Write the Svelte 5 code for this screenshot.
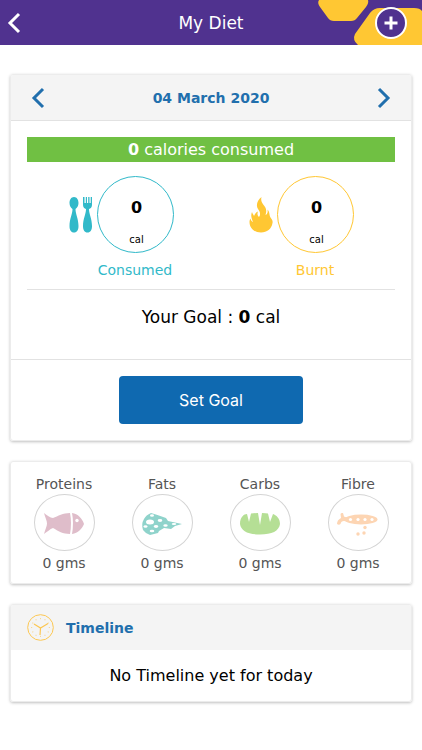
<script>
	// ---- state ----
	const DAY = 24 * 60 * 60 * 1000;

	let date = $state(Date.UTC(2020, 2, 4));
	let consumed = $state(0);
	let burnt = $state(0);
	let goal = $state(0);

	const nutrients = [
		{ id: 'proteins', label: 'Proteins', grams: 0 },
		{ id: 'fats', label: 'Fats', grams: 0 },
		{ id: 'carbs', label: 'Carbs', grams: 0 },
		{ id: 'fibre', label: 'Fibre', grams: 0 }
	];

	const ticks = Array.from({ length: 12 }, (_, i) => i * 30);

	let dateLabel = $derived(
		new Date(date).toLocaleDateString('en-GB', {
			day: '2-digit',
			month: 'long',
			year: 'numeric',
			timeZone: 'UTC'
		})
	);
</script>

<header class="topbar">
	<svg class="hexes" width="106" height="45" viewBox="0 0 106 45" aria-hidden="true">
		<path
			d="M3 0Q1 3 4 7L12 18Q14 21 18 21H35Q39 21 41 18L50 7Q53 3 52 0ZM42 45Q36 40 39 34L54 13Q58 8 64 8H98Q104 8 106 11V45Z"
			fill="#ffc733"
		/>
	</svg>
	<button type="button" class="icon-btn" aria-label="Back">
		<svg width="14" height="22" viewBox="0 0 14 22"><path d="M12 2L3 11L12 20" /></svg>
	</button>
	<h1>My Diet</h1>
	<button type="button" class="add" aria-label="Add">
		<svg width="34" height="34" viewBox="0 0 34 34">
			<circle cx="17" cy="17" r="15" fill="#50328f" stroke="#fff" stroke-width="2" />
			<path d="M17 10.500V23.500M10.500 17H23.500" stroke="#fff" stroke-width="3" />
		</svg>
	</button>
</header>

<main>
	<section class="card">
		<div class="card-head dates">
			<button
				type="button"
				class="icon-btn"
				aria-label="Previous day"
				onclick={() => (date -= DAY)}
			>
				<svg width="14" height="22" viewBox="0 0 14 22"><path d="M12 2L3 11L12 20" /></svg>
			</button>
			<h2>{dateLabel}</h2>
			<button type="button" class="icon-btn" aria-label="Next day" onclick={() => (date += DAY)}>
				<svg width="14" height="22" viewBox="0 0 14 22"><path d="M2 2L11 11L2 20" /></svg>
			</button>
		</div>

		<div class="summary">
			<p class="banner"><b>{consumed}</b> calories consumed</p>
			<div class="meters">
				<div class="meter consumed">
					<svg width="24" height="36" viewBox="0 0 24 36" fill="currentColor" aria-hidden="true">
						<path
							d="M5 0C8 0 9.500 3 9.500 6C9.500 9 8 11 6.500 12C6.500 17 9.500 22 9.500 29C9.500 33 8 35.500 5 35.500S.500 33 .500 29C.500 22 3.500 17 3.500 12C2 11 .500 9 .500 6C.500 3 2 0 5 0Z"
						/>
						<path
							d="M14 0H15.500V6H16.800V0H18V6H19.200V0H20.500V6H21.700V0H23V8C23 10.500 21.500 11.500 20 12C20 17 23 22 23 29C23 33 21.500 35.500 18.500 35.500S14 33 14 29C14 22 17 17 17 12C15.500 11.500 14 10.500 14 8Z"
						/>
					</svg>
					<div class="ring"><b>{consumed}</b><small>cal</small></div>
					<span class="name">Consumed</span>
				</div>
				<div class="meter burnt">
					<svg width="24" height="36" viewBox="0 0 24 36" fill="currentColor" aria-hidden="true">
						<path
							d="M12.500 0C11.500 4 13 6 15 8.500C17 11 18 13.500 16.500 18C18.500 17 19 15 18.500 12.500C21 15 20 18 21.500 20.500C23 22.500 24 24 23.500 26C22.500 32 18 35.500 12 35.500C5 35.500 .500 31 .500 25C.500 23.500 1 22.500 1.500 21.500C2 23.500 2.500 24.500 4 25C2.500 21 1.500 18.500 3 15C3.500 17 4.500 17.500 5 19C6 17 6.500 15.500 9 14.500C8 17 8.500 18.500 10 20C12 17 11 15 9 12C6.500 8 8.500 3 12.500 0Z"
						/>
					</svg>
					<div class="ring"><b>{burnt}</b><small>cal</small></div>
					<span class="name">Burnt</span>
				</div>
			</div>
			<p class="goal">Your Goal : <b>{goal}</b> cal</p>
		</div>

		<div class="actions">
			<button type="button" class="primary">Set Goal</button>
		</div>
	</section>

	<section class="card nutrients">
		{#each nutrients as item (item.id)}
			<div class="nutrient">
				<span>{item.label}</span>
				<div class="plate">
					<svg width="44" height="34" viewBox="0 0 44 34" aria-hidden="true">
						{#if item.id === 'proteins'}
							<g fill="#dfbdca">
								<path
									d="M2 7C5 9 8 12 11 12C16 10 21 7 28 7Q30 17 28 28C21 28 16 25 11 22C8 23 5 26 2 28C3 24 5 20 5 17.500C5 15 3 11 2 7Z"
								/>
								<path d="M30 7C36 8 40 12 42 18C40 23 36 27 30 28Q32 17 30 7Z" />
							</g>
							<circle cx="35" cy="14.500" r="1.700" fill="#fff" />
						{:else if item.id === 'fats'}
							<path
								d="M11 7Q18 9 26 12L28 15L42 18L35 20L31 23L24 22L19 25L18 27L10 29Q6 28 3 24Q1 18 4 13Q6 9 11 7Z"
								fill="#8fd3cb"
							/>
							<g fill="#fff">
								<ellipse cx="12" cy="9.500" rx="2" ry="1.200" />
								<ellipse cx="10" cy="16" rx="4" ry="2.500" />
								<ellipse cx="20" cy="14.500" rx="2.300" ry="1.400" />
								<ellipse cx="5.500" cy="20.500" rx="2" ry="1.300" />
								<ellipse cx="16" cy="20.500" rx="2.200" ry="1.400" />
								<ellipse cx="25.500" cy="19.500" rx="2.200" ry="1.200" />
								<ellipse cx="34" cy="18" rx="2.300" ry="1" />
								<ellipse cx="12" cy="25" rx="2.300" ry="1.300" />
							</g>
						{:else if item.id === 'carbs'}
							<path
								d="M2 18C2 11 6 8 9 8L11 16L13 7.500Q16 7 20 7L22 19L24 7Q28 7 30 7.500L32 16L35 8C38 9 42 12 42 18C41 25 34 28.500 22 28.500S3 25 2 18Z"
								fill="#b5df95"
							/>
						{:else}
							<g fill="#fdd5b3">
								<ellipse cx="25" cy="13.500" rx="16.500" ry="5" />
								<path
									d="M14 10.500Q10 12 8 10.500L7 7Q5 6.500 4.500 8L5 12Q1 14 1 18Q3 19.500 4.500 18Q5 15 8 15L14 16Z"
								/>
								<circle cx="29" cy="21.500" r="1.700" />
								<circle cx="22" cy="28" r="1.700" />
								<circle cx="28" cy="27" r="1.700" />
							</g>
							<g fill="#fff">
								<circle cx="14.500" cy="13.500" r="1.600" />
								<circle cx="22" cy="13.500" r="1.600" />
								<circle cx="29" cy="13.500" r="1.600" />
								<circle cx="36" cy="13.500" r="1.600" />
							</g>
						{/if}
					</svg>
				</div>
				<span>{item.grams} gms</span>
			</div>
		{/each}
	</section>

	<section class="card">
		<div class="card-head timeline">
			<svg width="27" height="27" viewBox="0 0 27 27" fill="none" stroke="#fcc752" aria-hidden="true">
				<circle cx="13.500" cy="13.500" r="12.800" />
				{#each ticks as angle (angle)}
					<path
						d="M13.500 4V5.200"
						stroke-opacity="0.600"
						transform="rotate({angle} 13.500 13.500)"
					/>
				{/each}
				<path d="M7 10L13.500 14L21 9.500M13.500 14L13 21" stroke-width="1.200" />
			</svg>
			<h2>Timeline</h2>
		</div>
		<p class="empty">No Timeline yet for today</p>
	</section>
</main>

<style>
	:global(body) {
		margin: 0;
		background: #fff;
		color: #000;
		font-family: 'DejaVu Sans', Verdana, sans-serif;
		font-size: 14px;
		line-height: 20px;
	}
	h1,
	h2,
	p {
		margin: 0;
	}
	svg {
		display: block;
	}
	button {
		padding: 0;
		border: 0;
		background: none;
		font: inherit;
		cursor: pointer;
	}

	/* top bar */
	.topbar {
		position: relative;
		display: flex;
		align-items: center;
		justify-content: space-between;
		height: 45px;
		padding: 0 14px 0 7px;
		background: #50328f;
		color: #fff;
	}
	.topbar h1 {
		flex: 1;
		padding-left: 27px;
		font-size: 17px;
		font-weight: 400;
		text-align: center;
	}
	.hexes {
		position: absolute;
		top: 0;
		right: 0;
	}
	.add {
		position: relative;
	}
	.icon-btn {
		color: inherit;
	}
	.icon-btn path {
		fill: none;
		stroke: currentColor;
		stroke-width: 3;
	}

	/* cards */
	main {
		display: flex;
		flex-direction: column;
		gap: 20px;
		padding: 29px 10px;
	}
	.card {
		overflow: hidden;
		border: 1px solid #ececec;
		border-radius: 3px;
		box-shadow: 0 1px 3px rgba(0, 0, 0, 0.25);
	}
	.card-head {
		display: flex;
		align-items: center;
		height: 45px;
		padding: 0 20px;
		background: #f4f4f4;
		color: #216fad;
	}
	.card-head h2 {
		font-size: 14px;
		font-weight: 700;
	}
	.dates {
		justify-content: space-between;
		border-bottom: 1px solid #e2e2e2;
	}
	.timeline {
		gap: 12px;
		padding: 0 16px;
	}

	/* day summary */
	.summary {
		padding: 16px 16px 0;
	}
	.banner {
		background: #70c043;
		color: #fff;
		font-size: 16px;
		line-height: 25px;
		text-align: center;
	}
	.meters {
		display: flex;
		justify-content: center;
		gap: 75px;
		padding: 14px 0 9px;
		border-bottom: 1px solid #e2e2e2;
	}
	.meter {
		display: grid;
		grid-template-columns: 24px 77px;
		gap: 7px 4px;
		align-items: center;
	}
	.consumed {
		color: #31b9c9;
	}
	.burnt {
		color: #ffc733;
	}
	.ring {
		display: flex;
		box-sizing: border-box;
		flex-direction: column;
		align-items: center;
		gap: 12px;
		height: 77px;
		padding: 21px 0 0 3px;
		border: 1px solid currentColor;
		border-radius: 50%;
	}
	.ring b,
	.ring small {
		color: #000;
	}
	.ring b {
		font-size: 16px;
	}
	.ring small {
		font-size: 10px;
		line-height: 20px;
	}
	.name {
		grid-column: 2;
		text-align: center;
	}
	.goal {
		padding: 17px 0 32px;
		font-size: 17px;
		text-align: center;
	}
	.actions {
		padding: 16px;
		border-top: 1px solid #e2e2e2;
	}
	.primary {
		display: block;
		width: 50%;
		height: 48px;
		margin: 0 auto;
		border-radius: 4px;
		background: #0f69b0;
		color: #fff;
		font-family: Inter, sans-serif;
		font-size: 16px;
	}

	/* nutrients */
	.nutrients {
		display: grid;
		grid-template-columns: repeat(4, 1fr);
		padding: 12px 4px 10px;
		color: #555;
	}
	.nutrient {
		display: flex;
		flex-direction: column;
		align-items: center;
	}
	.nutrient span:last-child {
		padding-top: 2px;
	}
	.plate {
		display: grid;
		box-sizing: border-box;
		width: 61px;
		height: 57px;
		place-items: center;
		border: 1px solid #d4d4d4;
		border-radius: 50%;
	}

	.empty {
		padding: 16px 16px 15px;
		font-size: 16px;
		text-align: center;
	}
</style>
